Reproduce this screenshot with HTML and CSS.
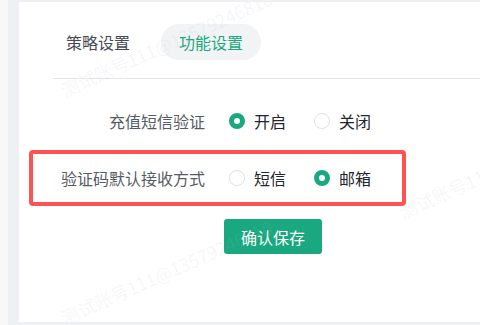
FILE: index.html
```html
<!DOCTYPE html>
<html lang="zh-CN">
<head>
  <meta charset="UTF-8">
  <meta name="viewport" content="width=device-width, initial-scale=1.0">
  <title>功能设置</title>
  <link rel="stylesheet" href="styles.css">
</head>
<body>
  <div class="page">
    <div class="card">
      <div class="tabs">
        <div class="tab">策略设置</div>
        <div class="tab active">功能设置</div>
      </div>
      <div class="divider"></div>

      <div class="form">
        <div class="row">
          <div class="label">充值短信验证</div>
          <label class="option"><input type="radio" name="sms" checked><span>开启</span></label>
          <label class="option"><input type="radio" name="sms"><span>关闭</span></label>
        </div>
        <div class="row highlight">
          <div class="label">验证码默认接收方式</div>
          <label class="option"><input type="radio" name="way"><span>短信</span></label>
          <label class="option"><input type="radio" name="way" checked><span>邮箱</span></label>
        </div>
        <button class="save">确认保存</button>
      </div>

      <span class="watermark wm1">测试账号111@13579246810</span>
      <span class="watermark wm2">测试账号111@13579246810</span>
      <span class="watermark wm3">测试账号111@13579246810</span>
    </div>
  </div>
</body>
</html>
```

FILE: styles.css
```css
* {
  margin: 0;
  padding: 0;
  box-sizing: border-box;
}

body {
  font-family: "Noto Sans CJK SC", "Noto Sans", sans-serif;
  background: #f8f8fa;
  padding-left: 8px;
  height: 325px;
  overflow: hidden;
}

.page {
  background: #eff0f4;
  padding: 2px 0 3px 11px;
  height: 325px;
}

.card {
  position: relative;
  background: white;
  height: 320px;
  overflow: hidden;
}

.tabs {
  display: flex;
  gap: 13px;
  padding: 22px 0 0 29px;
}

.tab {
  height: 36px;
  line-height: 36px;
  padding: 0 18px;
  border-radius: 18px;
  font-size: 16px;
  color: #464a53;
}

.tab.active {
  background: #f2f3f5;
  color: #19a880;
}

.divider {
  height: 1px;
  background: #e4e6ec;
  margin: 18px 0 0 34px;
}

.form {
  padding-top: 18px;
}

.row {
  display: flex;
  align-items: center;
  width: 377px;
  height: 48px;
  margin-left: 10px;
  border: 4px solid transparent;
  border-radius: 4px;
}

.row.highlight {
  height: 56px;
  margin-top: 5px;
  border-color: #ff5353;
}

.label {
  width: 172px;
  text-align: right;
  font-size: 16px;
  color: #575b64;
  margin-right: 24px;
}

.option {
  display: flex;
  align-items: center;
  font-size: 16px;
  color: #23252b;
  margin-right: 28px;
}

.option input {
  appearance: none;
  width: 16px;
  height: 16px;
  border: 1px solid #dfe1e8;
  border-radius: 50%;
  margin-right: 9px;
  background: white;
}

.option input:checked {
  border: 5px solid #19a880;
  background: white;
}

.save {
  margin: 13px 0 0 205px;
  width: 98px;
  height: 35px;
  border: none;
  border-radius: 3px;
  background: #19a880;
  color: white;
  font-family: inherit;
  font-size: 16px;
}

.watermark {
  position: absolute;
  font-size: 18px;
  color: rgba(180, 184, 192, 0.13);
  white-space: nowrap;
  transform-origin: left bottom;
  transform: rotate(-24deg);
  pointer-events: none;
}

.wm1 { left: 48px; top: 74px; }
.wm2 { left: 48px; top: 302px; }
.wm3 { left: 386px; top: 196px; }
```
